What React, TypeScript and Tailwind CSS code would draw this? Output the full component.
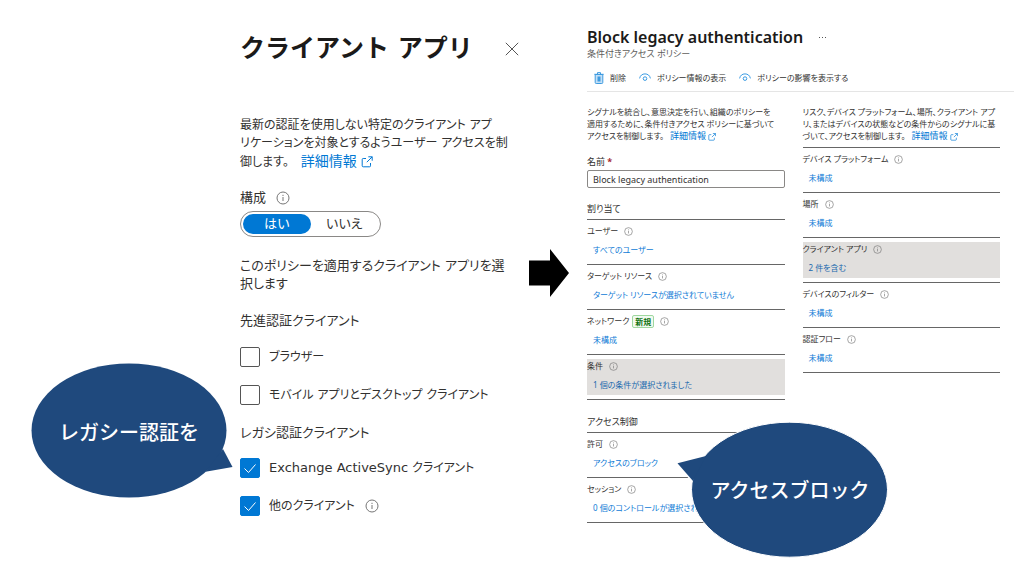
import { useState, type ReactNode } from "react";

type Setting = {
  label: string;
  value: string;
  isNew?: boolean;
  active?: boolean;
};

const assignments: Setting[] = [
  { label: "ユーザー", value: "すべてのユーザー" },
  { label: "ターゲット リソース", value: "ターゲット リソースが選択されていません" },
  { label: "ネットワーク", value: "未構成", isNew: true },
  { label: "条件", value: "1 個の条件が選択されました", active: true },
];

const accessControls: Setting[] = [
  { label: "許可", value: "アクセスのブロック" },
  { label: "セッション", value: "0 個のコントロールが選択されました" },
];

const conditions: Setting[] = [
  { label: "デバイス プラットフォーム", value: "未構成" },
  { label: "場所", value: "未構成" },
  { label: "クライアント アプリ", value: "2 件を含む", active: true },
  { label: "デバイスのフィルター", value: "未構成" },
  { label: "認証フロー", value: "未構成" },
];

const InfoIcon = ({ className }: { className: string }) => (
  <svg viewBox="0 0 14 14" className={`shrink-0 text-[#767676] ${className}`} fill="none" stroke="currentColor" aria-hidden="true">
    <circle cx="7" cy="7" r="6" />
    <path d="M7 6v4M7 3.8v1.2" />
  </svg>
);

const ExternalIcon = ({ className }: { className: string }) => (
  <svg viewBox="0 0 12 12" className={`inline-block ${className}`} fill="none" stroke="currentColor" aria-hidden="true">
    <path d="M5 2.5H2.2a1 1 0 0 0-1 1v6.3a1 1 0 0 0 1 1h6.3a1 1 0 0 0 1-1V7M7.3.8h3.9v3.9M11.2.8 5.8 6.2" />
  </svg>
);

const EyeIcon = () => (
  <svg viewBox="0 0 12 10" className="h-[10px] w-3 text-[#3a9be3]" fill="none" stroke="currentColor" aria-hidden="true">
    <path d="M.6 5.4C1.2 2.4 3.3.9 6 .9s4.800 1.500 5.400 4.500" />
    <circle cx="6" cy="5.600" r="1.800" />
  </svg>
);

const TrashIcon = () => (
  <svg viewBox="0 0 10 12" className="h-3 w-[10px]" fill="none" aria-hidden="true">
    <path d="M1.200 2.500h7.600v8a1 1 0 0 1-1 1H2.200a1 1 0 0 1-1-1z" fill="#c3e0f6" stroke="#3f9be0" />
    <path d="M.3 2.300h9.400M3.500 2V.6h3V2" stroke="#3f9be0" />
    <path d="M3.500 4.500h3v5h-3z" fill="#3f9be0" />
  </svg>
);

const CheckOption = ({ label, defaultChecked, children }: { label: ReactNode; defaultChecked?: boolean; children?: ReactNode }) => (
  <div className="flex h-5 items-center gap-[10px]">
    <label className="flex items-center gap-[9px]">
      <span className="relative h-5 w-5">
        <input
          type="checkbox"
          defaultChecked={defaultChecked}
          className="peer block h-5 w-5 appearance-none rounded-xs border border-[#555] bg-white checked:border-[#0078d4] checked:bg-[#0078d4]"
        />
        <svg viewBox="0 0 20 20" className="pointer-events-none absolute inset-0 hidden peer-checked:block" fill="none" stroke="white" aria-hidden="true">
          <path d="m4.500 10.500 4 4 7-8" />
        </svg>
      </span>
      <span>{label}</span>
    </label>
    {children}
  </div>
);

const SettingRow = ({ label, value, isNew, active }: Setting) => (
  <li className="border-t border-[#666] py-1">
    <div className={`flex h-9 flex-col gap-[5px] ${active ? "bg-[#e1dfdd]" : ""}`}>
      <div className="flex h-[14px] items-center">
        <span>{label}</span>
        {isNew && (
          <span className="ml-[3px] rounded-xs border border-[#9fd89f] bg-[#f1faf1] px-[2px] leading-[11px] font-bold text-[#0e700e]">新規</span>
        )}
        <InfoIcon className="ml-[6px] h-[9px] w-[9px]" />
      </div>
      <a href="#" className={`ml-[6px] h-[14px] self-start ${active ? "text-[#1968ad]" : "text-[#0f7bd6]"}`}>{value}</a>
    </div>
  </li>
);

const SettingList = ({ items }: { items: Setting[] }) => (
  <ul className="border-b border-[#666] leading-[14px]">
    {items.map((item) => <SettingRow key={item.label} {...item} />)}
  </ul>
);

const ClientAppsPanel = () => {
  const [enabled, setEnabled] = useState(true);

  return (
    <section className="relative w-[529px] shrink-0 pt-[33px] pl-[240px] font-['DejaVu_Sans','Noto_Sans_CJK_JP',sans-serif] text-[13px] leading-[18px] text-[#323130]">
      <header className="flex items-center">
        <h1 className="text-[25px] leading-8 font-bold text-[#1b1a19] [font-feature-settings:normal]">クライアント アプリ</h1>
        <button type="button" aria-label="閉じる" className="ml-8">
          <svg viewBox="0 0 14 14" className="h-[14px] w-[14px]" stroke="#555" aria-hidden="true">
            <path d="m.8.8 12.400 12.400M13.200.8.8 13.200" />
          </svg>
        </button>
      </header>

      <p className="mt-[51px] text-xs leading-[18px]">
        最新の認証を使用しない特定のクライアント アプ<br />
        リケーションを対象とするようユーザー アクセスを制<br />
        御します。 <a href="#" className="ml-2 text-sm leading-[18px] text-[#0078d4]">詳細情報 <ExternalIcon className="h-3 w-3" /></a>
      </p>

      <fieldset className="mt-[18px]">
        <legend className="flex items-center gap-[10px]">構成 <InfoIcon className="h-[14px] w-[14px]" /></legend>
        <div className="mt-1 flex h-[26px] w-[141px] rounded-full border border-[#8a8886] p-[2px] text-center leading-5">
          <label className={`flex-1 rounded-full ${enabled ? "bg-[#0078d4] text-white" : ""}`}>
            <input type="radio" name="configure" className="sr-only" checked={enabled} onChange={() => setEnabled(true)} />
            はい
          </label>
          <label className={`flex-1 rounded-full ${enabled ? "" : "bg-[#0078d4] text-white"}`}>
            <input type="radio" name="configure" className="sr-only" checked={!enabled} onChange={() => setEnabled(false)} />
            いいえ
          </label>
        </div>
      </fieldset>

      <p className="mt-5">このポリシーを適用するクライアント アプリを選<br />択します</p>

      <h2 className="mt-[19px]">先進認証クライアント</h2>
      <div className="mt-[17px] flex flex-col gap-[18px] text-xs">
        <CheckOption label="ブラウザー" />
        <CheckOption label="モバイル アプリとデスクトップ クライアント" />
      </div>

      <h2 className="mt-[19px]">レガシ認証クライアント</h2>
      <div className="mt-4 flex flex-col gap-[18px] text-xs">
        <CheckOption label={<><span className="text-[13px]">Exchange ActiveSync</span> クライアント</>} defaultChecked />
        <CheckOption label="他のクライアント" defaultChecked>
          <InfoIcon className="h-[14px] w-[14px]" />
        </CheckOption>
      </div>

      <div className="absolute top-[362px] left-[30px] h-[138px] w-[204px]">
        <svg viewBox="0 0 204 138" className="absolute inset-0" fill="#1f497d" aria-hidden="true">
          <ellipse cx="99" cy="68.500" rx="97.500" ry="67" />
          <path d="m193 87 9.500 18-27 4.700z" />
        </svg>
        <p className="relative w-[198px] pt-[55px] text-center text-xl leading-8 font-medium text-white [font-feature-settings:normal]">レガシー認証を</p>
      </div>
    </section>
  );
};

const PolicyPanel = () => (
  <section className="relative mr-[10px] min-w-0 flex-1 pt-[26px] text-[8px] leading-3 text-[#323130]">
    <header className="flex items-center gap-4">
      <h1 className="text-base leading-[22px] font-semibold text-[#1b1a19]">Block legacy authentication</h1>
      <button type="button" aria-label="その他" className="flex gap-[2px]">
        <span className="h-px w-px bg-[#555]" />
        <span className="h-px w-px bg-[#555]" />
        <span className="h-px w-px bg-[#555]" />
      </button>
    </header>
    <p className="text-[9px] text-[#605e5c]">条件付きアクセス ポリシー</p>

    <nav className="mt-2 flex h-6 items-center gap-[13px] border-b border-[#e5e5e5] pb-1 pl-[7px]">
      <button type="button" className="flex items-center gap-[6px]"><TrashIcon />削除</button>
      <button type="button" className="flex items-center gap-[6px]"><EyeIcon />ポリシー情報の表示</button>
      <button type="button" className="flex items-center gap-[6px]"><EyeIcon />ポリシーの影響を表示する</button>
    </nav>

    <div className="mr-[14px] grid grid-cols-2 gap-[18px] pt-[14px]">
      <div>
        <p>
          シグナルを統合し、意思決定を行い、組織のポリシーを<br />
          適用するために、条件付きアクセス ポリシーに基づいて<br />
          アクセスを制御します。 <a href="#" className="ml-1 text-[9px] text-[#0078d4]">詳細情報 <ExternalIcon className="h-2 w-2" /></a>
        </p>
        <label htmlFor="policy-name" className="mt-[14px] block text-[9px]">名前 <span className="font-bold text-[#a4262c]">*</span></label>
        <input
          id="policy-name"
          type="text"
          defaultValue="Block legacy authentication"
          className="mt-[2px] block h-[18px] w-full rounded-xs border border-[#8a8886] px-[5px] text-[9px]"
        />
        <h2 className="mt-[15px] mb-1 text-[9px]">割り当て</h2>
        <SettingList items={assignments} />
        <h2 className="mt-4 mb-1 text-[9px]">アクセス制御</h2>
        <SettingList items={accessControls} />
      </div>

      <div>
        <p className="mb-[5px]">
          リスク、デバイス プラットフォーム、場所、クライアント アプ<br />
          リ、またはデバイスの状態などの条件からのシグナルに基<br />
          づいて、アクセスを制御します。 <a href="#" className="ml-1 text-[9px] text-[#0078d4]">詳細情報 <ExternalIcon className="h-2 w-2" /></a>
        </p>
        <SettingList items={conditions} />
      </div>
    </div>

    <div className="absolute top-[420px] left-[88px] h-[140px] w-[214px]">
      <svg viewBox="0 0 214 140" className="absolute inset-0" fill="#1f497d" aria-hidden="true">
        <path d="M31 36 2.500 43.200 18 61z" stroke="white" strokeWidth="3" />
        <ellipse cx="114.500" cy="69.700" rx="98" ry="67.500" stroke="white" strokeWidth="1" />
        <path d="M31 36 2.500 43.200 18 61z" />
      </svg>
      <p className="relative ml-4 w-[198px] pt-[55px] text-center text-xl leading-8 font-medium text-white [font-feature-settings:normal]">アクセスブロック</p>
    </div>
  </section>
);

export default function App() {
  return (
    <main className="flex min-h-screen bg-white pb-3 font-['Noto_Sans','Noto_Sans_CJK_JP',sans-serif] whitespace-nowrap [font-feature-settings:'palt']" lang="ja">
      <ClientAppsPanel />
      <svg viewBox="0 0 40 48" className="mt-[249px] mr-[18px] h-12 w-10 shrink-0" fill="black" aria-hidden="true">
        <path d="M0 11.500h21V0l19 24-19 24V36.500H0z" />
      </svg>
      <PolicyPanel />
    </main>
  );
}
